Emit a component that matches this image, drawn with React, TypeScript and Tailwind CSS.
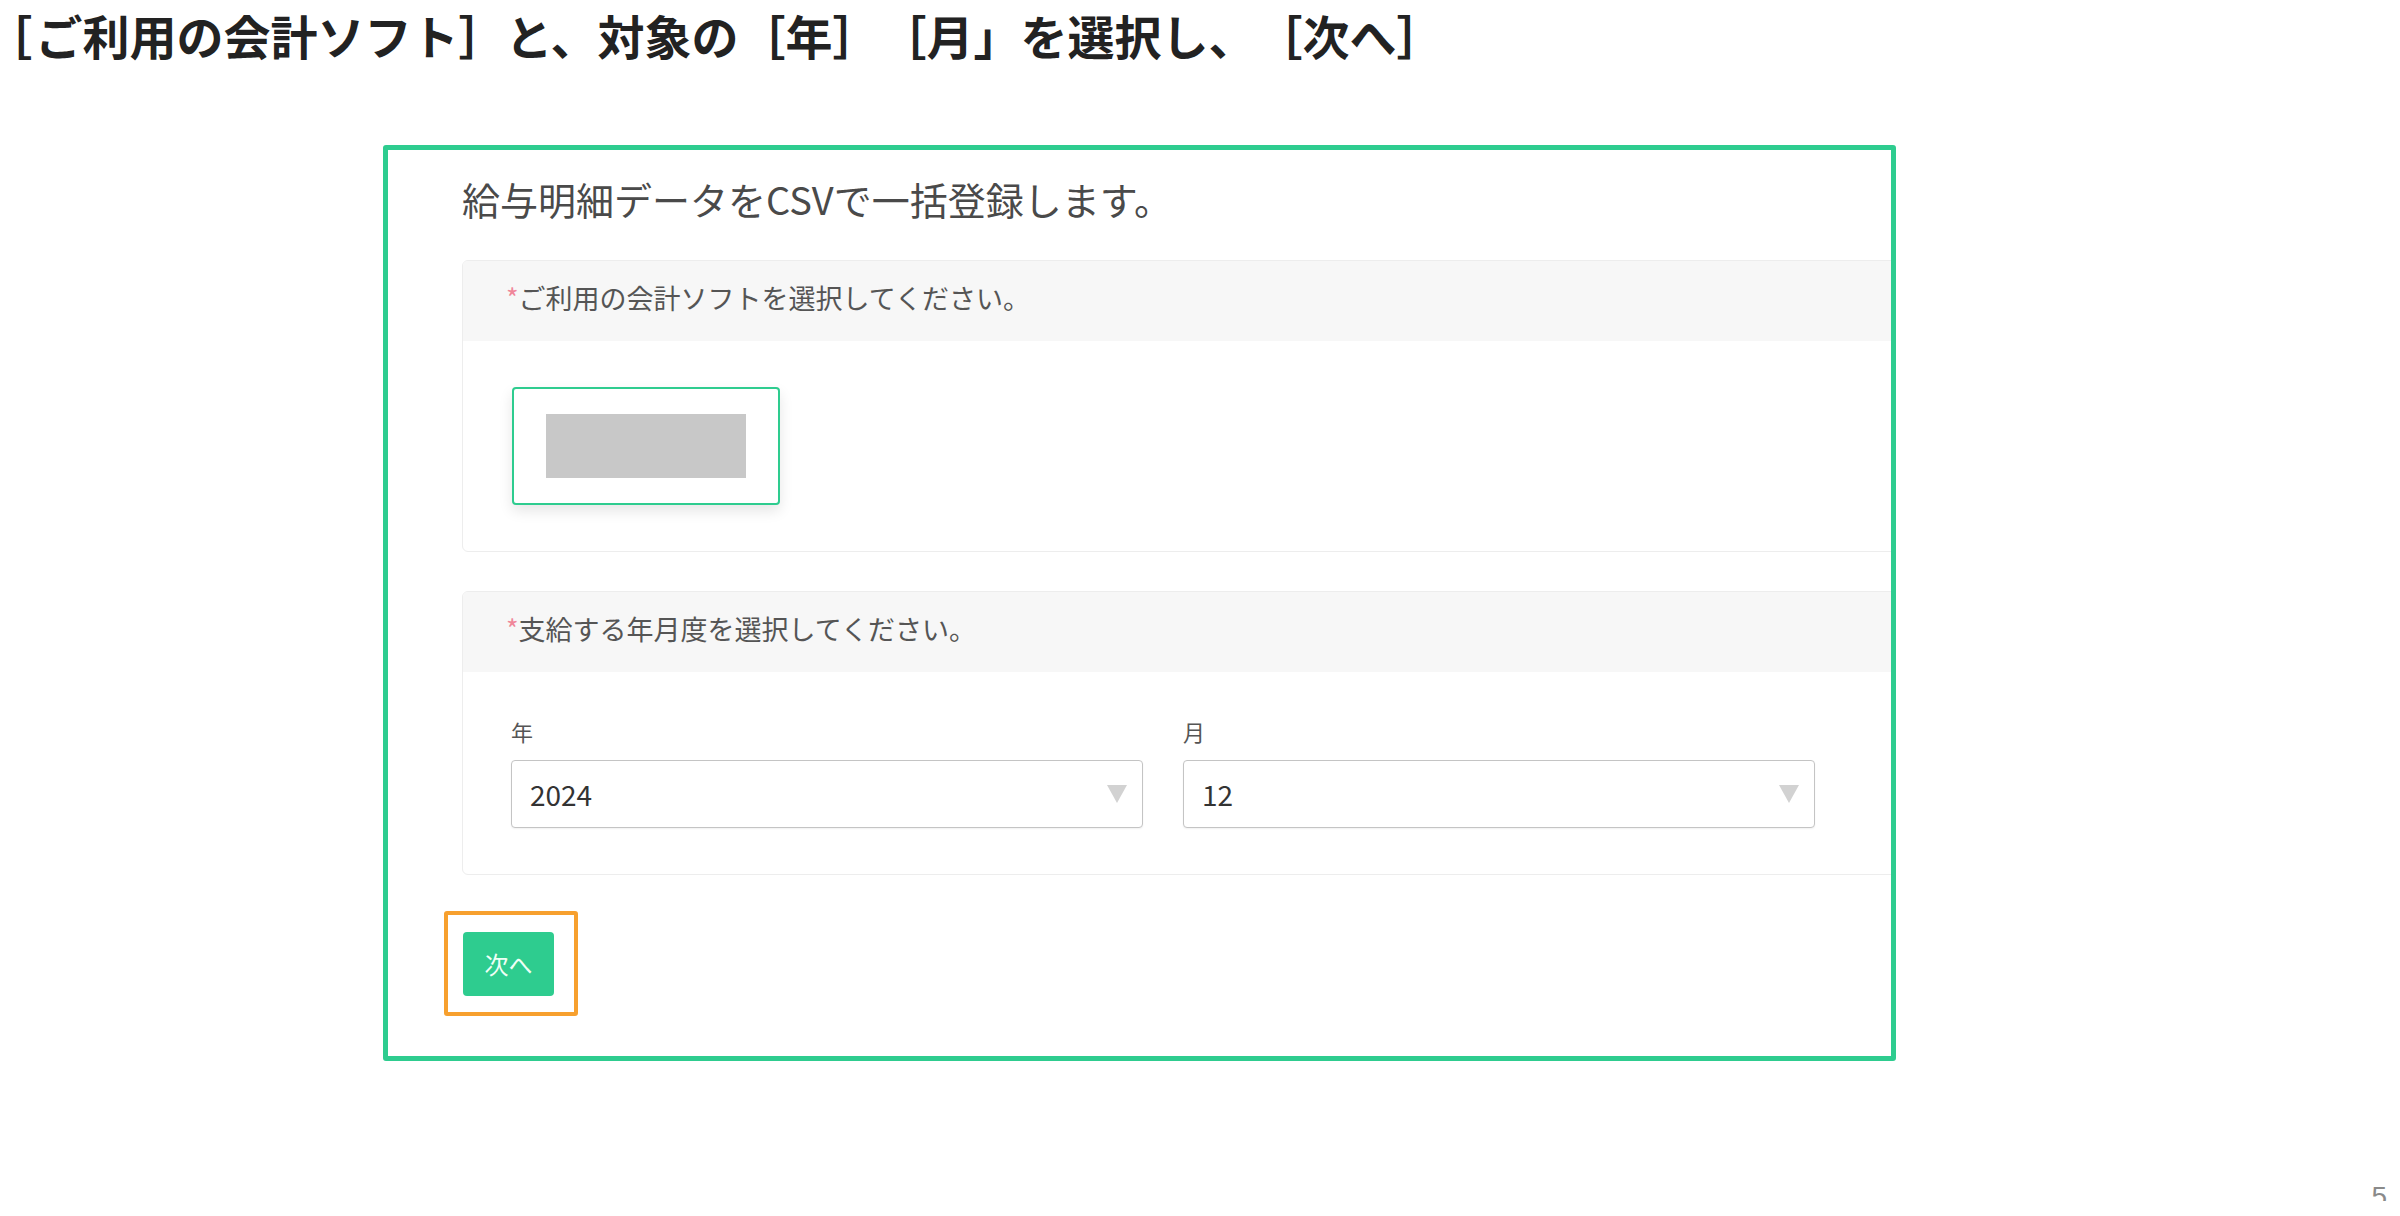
const jp = { fontFamily: '"Noto Sans CJK JP", "Noto Sans", sans-serif' };

function SectionHeader({ label }: { label: string }) {
  return (
    <div className="flex h-[80px] items-center bg-[#f7f7f7] pb-[8px] pl-[43px] text-[27px] leading-none text-[#555555]">
      <span className="text-[#f0879a]">*</span>
      <span>{label}</span>
    </div>
  );
}

function SelectBox({ label, value }: { label: string; value: string }) {
  return (
    <div className="flex w-[632px] flex-col">
      <span className="mb-[18px] text-[22px] leading-none text-[#555555]">{label}</span>
      <div className="flex h-[68px] items-center justify-between rounded-[4px] border-[1.5px] border-[#c4c4c4] bg-white pl-[18px] pr-[15px] shadow-[0_1px_2px_rgba(0,0,0,0.06)]">
        <span className="text-[28px] leading-none text-[#333333]">{value}</span>
        <svg width="20" height="18" viewBox="0 0 20 18">
          <path d="M0 0 H20 L10 18 Z" fill="#d2d2d2" />
        </svg>
      </div>
    </div>
  );
}

export default function App() {
  return (
    <div
      className="flex h-[1216px] w-[2400px] flex-col overflow-hidden bg-white [text-spacing-trim:space-all]"
      style={jp}
    >
      <h1 className="pl-[8px] pt-[11px] text-[47px] font-bold leading-none text-[#222222]">
        <span className="mr-[4px] [font-feature-settings:'palt']">［</span>
        ご利用の会計ソフト］と、対象の［年］［月」を選択し、［次へ］
      </h1>

      <div className="ml-[383px] mt-[87px] w-[1513px] overflow-hidden rounded-[3px] border-[5px] border-[#2ecc8f] pb-[40px] pt-[30px]">
        <p className="pl-[74px] text-[38px] leading-none text-[#4a4a4a]">
          給与明細データをCSVで一括登録します。
        </p>

        <section className="-mr-[10px] ml-[74px] mt-[42px] overflow-hidden rounded-[6px] border border-[#ededed]">
          <SectionHeader label="ご利用の会計ソフトを選択してください。" />
          <div className="pb-[46px] pl-[49px] pt-[46px]">
            <div className="flex h-[118px] w-[268px] items-center justify-center rounded-[4px] border-2 border-[#2ecc8f] bg-white shadow-[0_6px_14px_rgba(0,0,0,0.10)]">
              <div className="h-[64px] w-[200px] bg-[#c8c8c8]" />
            </div>
          </div>
        </section>

        <section className="-mr-[10px] ml-[74px] mt-[39px] overflow-hidden rounded-[6px] border border-[#ededed]">
          <SectionHeader label="支給する年月度を選択してください。" />
          <div className="flex gap-[40px] pb-[46px] pl-[48px] pt-[48px]">
            <SelectBox label="年" value="2024" />
            <SelectBox label="月" value="12" />
          </div>
        </section>

        <div className="ml-[56px] mt-[36px] inline-flex rounded-[3px] border-4 border-[#f7a02e] pb-[16px] pl-[15px] pr-[20px] pt-[17px]">
          <button className="flex h-[64px] w-[91px] items-center justify-center rounded-[4px] bg-[#2ecc8f] text-[24px] leading-none text-[#effff6]">
            次へ
          </button>
        </div>
      </div>

      <div className="mt-[122px] flex justify-end pr-[13px]">
        <div className="h-[18px] overflow-hidden">
          <span
            className="block text-[28px] leading-none text-[#8a8a8a]"
            style={{ fontFamily: '"Liberation Sans", Arial, sans-serif' }}
          >
            5
          </span>
        </div>
      </div>
    </div>
  );
}
